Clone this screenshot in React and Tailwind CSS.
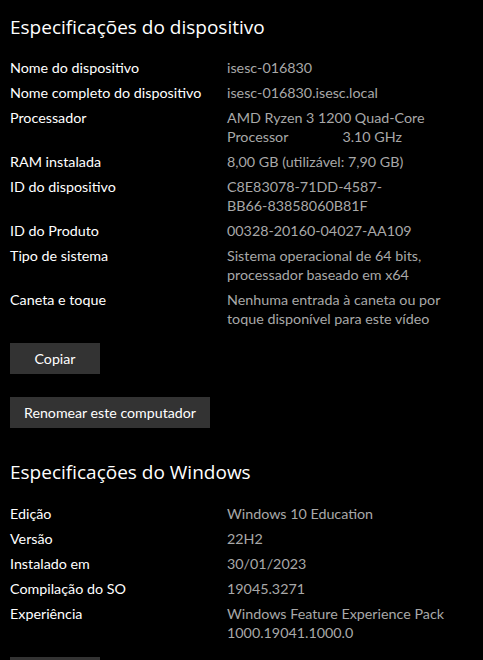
import React from 'react';

const deviceSpecs = [
  { label: 'Nome do dispositivo', value: ['isesc-016830'] },
  { label: 'Nome completo do dispositivo', value: ['isesc-016830.isesc.local'] },
  { label: 'Processador', value: ['AMD Ryzen 3 1200 Quad-Core', 'PROC'] },
  { label: 'RAM instalada', value: ['8,00 GB (utilizável: 7,90 GB)'] },
  { label: 'ID do dispositivo', value: ['C8E83078-71DD-4587-', 'BB66-83858060B81F'] },
  { label: 'ID do Produto', value: ['00328-20160-04027-AA109'] },
  { label: 'Tipo de sistema', value: ['Sistema operacional de 64 bits,', 'processador baseado em x64'] },
  { label: 'Caneta e toque', value: ['Nenhuma entrada à caneta ou por', 'toque disponível para este vídeo'] },
];

const windowsSpecs = [
  { label: 'Edição', value: ['Windows 10 Education'] },
  { label: 'Versão', value: ['22H2'] },
  { label: 'Instalado em', value: ['30/01/2023'] },
  { label: 'Compilação do SO', value: ['19045.3271'] },
  { label: 'Experiência', value: ['Windows Feature Experience Pack', '1000.19041.1000.0'] },
];

const SpecRow = ({ label, value }) => (
  <>
    <div className="text-white">{label}</div>
    <div className="text-[#a8a8a8] whitespace-nowrap">
      {value.map((line, i) =>
        line === 'PROC' ? (
          <div key={i}>
            Processor<span className="ml-[54px]">3.10 GHz</span>
          </div>
        ) : (
          <div key={i}>{line}</div>
        )
      )}
    </div>
  </>
);

const WinButton = ({ children, className = '' }) => (
  <button className={`h-[31px] bg-[#333333] text-white text-[14.2px] whitespace-nowrap ${className}`}>
    {children}
  </button>
);

export default function App() {
  return (
    <div
      className="h-screen bg-black px-[10px] pt-[13px] overflow-hidden"
      style={{ fontFamily: 'Lato, "Open Sans", sans-serif' }}
    >
      {/* Device specs */}
      <h1 className="text-white text-[19px] leading-[28px] font-normal font-['Open_Sans',sans-serif]">
        Especificações do dispositivo
      </h1>
      <div className="grid grid-cols-[217px_1fr] gap-y-[6px] text-[14.3px] leading-[19px] mt-[17px]">
        {deviceSpecs.map((s) => (
          <SpecRow key={s.label} {...s} />
        ))}
      </div>

      <div className="flex flex-col items-start mt-[15px] gap-[23px]">
        <WinButton className="w-[90px]">Copiar</WinButton>
        <WinButton className="w-[200px]">Renomear este computador</WinButton>
      </div>

      {/* Windows specs */}
      <h2 className="text-white text-[19px] leading-[28px] font-normal mt-[30px] font-['Open_Sans',sans-serif]">
        Especificações do Windows
      </h2>
      <div className="grid grid-cols-[217px_1fr] gap-y-[6px] text-[14.3px] leading-[19px] mt-[18px]">
        {windowsSpecs.map((s) => (
          <SpecRow key={s.label} {...s} />
        ))}
      </div>

      <div className="mt-[15px]">
        <WinButton className="w-[90px]">Copiar</WinButton>
      </div>
    </div>
  );
}
